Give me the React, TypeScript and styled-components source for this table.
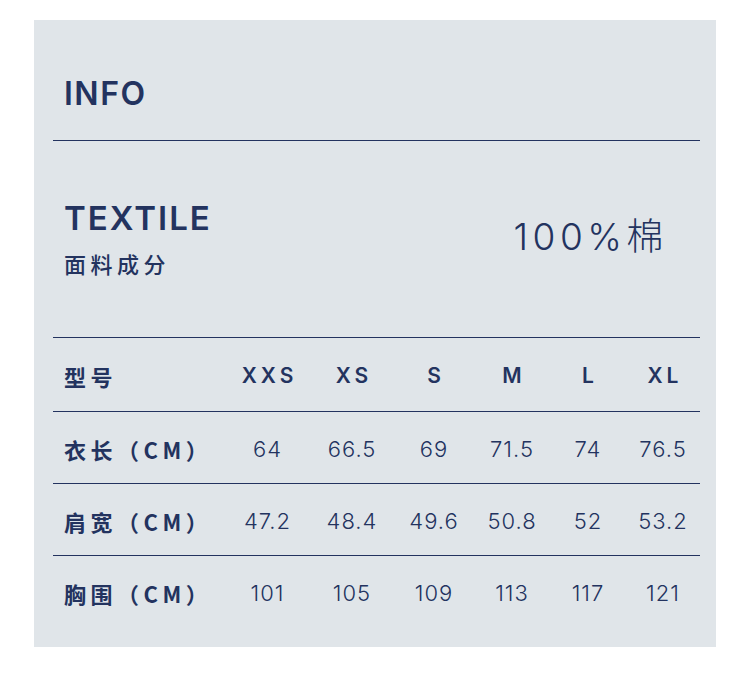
import React from "react";
import styled, { createGlobalStyle } from "styled-components";

const GlobalStyle = createGlobalStyle`
  html, body {
    margin: 0;
    padding: 0;
    background: #ffffff;
  }
  body {
    font-family: Inter, "Noto Sans CJK SC", sans-serif;
    color: #23335f;
  }
`;

const sizes = ["XXS", "XS", "S", "M", "L", "XL"];

const rows = [
  { label: "衣长（CM）", values: ["64", "66.5", "69", "71.5", "74", "76.5"] },
  { label: "肩宽（CM）", values: ["47.2", "48.4", "49.6", "50.8", "52", "53.2"] },
  { label: "胸围（CM）", values: ["101", "105", "109", "113", "117", "121"] },
];

function App() {
  return (
    <>
      <GlobalStyle />
      <Panel>
        <Header>
          <Title>INFO</Title>
        </Header>

        <Textile>
          <div>
            <TextileTitle>TEXTILE</TextileTitle>
            <TextileSub>面料成分</TextileSub>
          </div>
          <Material>100%棉</Material>
        </Textile>

        <SizeTable>
          <Row head>
            <Label>型号</Label>
            {sizes.map((s) => (
              <SizeCell key={s}>{s}</SizeCell>
            ))}
          </Row>
          {rows.map((r, i) => (
            <Row key={r.label} last={i === rows.length - 1}>
              <Label>{r.label}</Label>
              {r.values.map((v, j) => (
                <ValueCell key={j}>{v}</ValueCell>
              ))}
            </Row>
          ))}
        </SizeTable>
      </Panel>
    </>
  );
}

const Panel = styled.div`
  margin: 20px 0 0 34px;
  width: 682px;
  height: 627px;
  box-sizing: border-box;
  background: #e0e5e9;
  padding: 0 16px 0 19px;
`;

const Header = styled.div`
  height: 121px;
  box-sizing: border-box;
  border-bottom: 1px solid #23335f;
  display: flex;
  align-items: center;
  padding: 27px 0 0 11px;
`;

const Title = styled.h1`
  margin: 0;
  font-family: Inter, sans-serif;
  font-weight: 600;
  font-size: 32px;
  letter-spacing: 1.5px;
  line-height: 1;
`;

const Textile = styled.div`
  height: 197px;
  box-sizing: border-box;
  border-bottom: 1px solid #23335f;
  display: flex;
  justify-content: space-between;
  align-items: flex-start;
  padding: 61px 32px 0 11px;
`;

const TextileTitle = styled.h2`
  margin: 0;
  font-family: Inter, sans-serif;
  font-weight: 600;
  font-size: 33px;
  letter-spacing: 2px;
  line-height: 1;
`;

const TextileSub = styled.div`
  margin-top: 15px;
  font-family: "Noto Sans CJK SC", sans-serif;
  font-weight: 500;
  font-size: 22px;
  letter-spacing: 4.5px;
  line-height: 1.2;
`;

const Material = styled.div`
  margin-top: 13px;
  font-family: Inter, "Noto Sans CJK SC", sans-serif;
  font-weight: 300;
  font-size: 37px;
  letter-spacing: 4.5px;
  line-height: 1.2;
`;

const SizeTable = styled.div`
  display: flex;
  flex-direction: column;
`;

const Row = styled.div<{ last?: boolean; head?: boolean }>`
  display: grid;
  grid-template-columns: 172px 85px 84px 80px 76px 76px 74px;
  align-items: center;
  height: ${(p) => (p.head ? "74px" : "72px")};
  padding-top: 2px;
  box-sizing: border-box;
  border-bottom: ${(p) => (p.last ? "none" : "1px solid #23335f")};
`;

const Label = styled.div`
  padding-left: 11px;
  font-family: "Noto Sans CJK SC", sans-serif;
  font-weight: 700;
  font-size: 22px;
  letter-spacing: 4.5px;
  white-space: nowrap;
`;

const SizeCell = styled.div`
  text-align: center;
  font-family: Inter, sans-serif;
  font-weight: 600;
  font-size: 21px;
  letter-spacing: 4px;
  text-indent: 4px;
`;

const ValueCell = styled.div`
  text-align: center;
  font-family: Inter, sans-serif;
  font-weight: 300;
  font-size: 22px;
  letter-spacing: 1px;
`;

export default App;
